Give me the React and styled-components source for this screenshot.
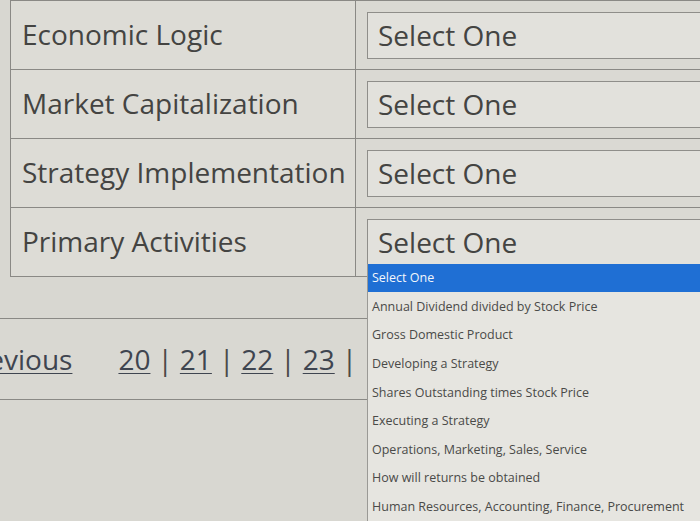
import { createGlobalStyle, styled } from "styled-components";

const rows = [
  "Economic Logic",
  "Market Capitalization",
  "Strategy Implementation",
  "Primary Activities",
];

const options = [
  "Select One",
  "Annual Dividend divided by Stock Price",
  "Gross Domestic Product",
  "Developing a Strategy",
  "Shares Outstanding times Stock Price",
  "Executing a Strategy",
  "Operations, Marketing, Sales, Service",
  "How will returns be obtained",
  "Human Resources, Accounting, Finance, Procurement",
];

const pages = ["20", "21", "22", "23"];

const GlobalStyle = createGlobalStyle`
  html, body {
    margin: 0;
    padding: 0;
    width: 700px;
    height: 521px;
    overflow: hidden;
    background: #d8d7d1;
    font-family: "Open Sans", "Noto Sans", sans-serif;
    color: #444442;
  }
`;

const App = () => {
  return (
    <>
      <GlobalStyle />
      <Page>
        <Table>
          {rows.map((label, i) => (
            <Row key={label}>
              <Label>{label}</Label>
              <Field>
                <SelectBox>
                  Select One
                  {i === rows.length - 1 && (
                    <Menu>
                      {options.map((opt, j) => (
                        <Option key={opt} $active={j === 0}>
                          {opt}
                        </Option>
                      ))}
                    </Menu>
                  )}
                </SelectBox>
              </Field>
            </Row>
          ))}
        </Table>
        <Pager>
          <PageLink href="#">Previous</PageLink>
          <Numbers>
            {pages.map((p) => (
              <span key={p}>
                <PageLink href="#">{p}</PageLink>
                <Sep>|</Sep>
              </span>
            ))}
          </Numbers>
        </Pager>
      </Page>
    </>
  );
};

const Page = styled.div`
  width: 700px;
  height: 521px;
  overflow: hidden;
`;

const Table = styled.div`
  margin-left: 10px;
  width: 760px;
  border-top: 1px solid #8a8985;
  border-left: 1px solid #8a8985;
`;

const Row = styled.div`
  display: grid;
  grid-template-columns: 345px 1fr;
  height: 68px;
  border-bottom: 1px solid #8a8985;
`;

const Label = styled.div`
  display: flex;
  align-items: center;
  padding-left: 11px;
  padding-bottom: 2px;
  font-size: 28px;
  background: #dddcd6;
  border-right: 1px solid #8a8985;
`;

const Field = styled.div`
  display: flex;
  align-items: center;
  padding-left: 11px;
  background: #dad9d3;
`;

const SelectBox = styled.div`
  position: relative;
  flex: 1;
  height: 45px;
  display: flex;
  align-items: center;
  padding-left: 10px;
  font-size: 28px;
  background: #e2e1dc;
  border: 1px solid #8f8e8a;
`;

const Menu = styled.div`
  position: absolute;
  top: 44px;
  left: -1px;
  right: 0;
  background: #e6e5e0;
  border-left: 1px solid #9a9995;
  z-index: 2;
`;

const Option = styled.div`
  height: 28.6px;
  display: flex;
  align-items: center;
  padding-left: 4px;
  font-size: 12.5px;
  color: ${(p) => (p.$active ? "#f2f6fb" : "#4a4a48")};
  background: ${(p) => (p.$active ? "#1f6fd4" : "transparent")};
`;

const Pager = styled.div`
  margin-top: 41px;
  height: 80px;
  display: flex;
  align-items: center;
  gap: 46px;
  margin-left: -40px;
  border-top: 1px solid #8a8985;
  border-bottom: 1px solid #8a8985;
  background: #d9d8d2;
  font-size: 28px;
`;

const Numbers = styled.div`
  display: flex;
`;

const PageLink = styled.a`
  color: #3f4550;
  text-decoration: underline;
  text-underline-offset: 3px;
  text-decoration-thickness: 1px;
`;

const Sep = styled.span`
  margin: 0 7px;
  color: #4a4a48;
`;

export default App;
